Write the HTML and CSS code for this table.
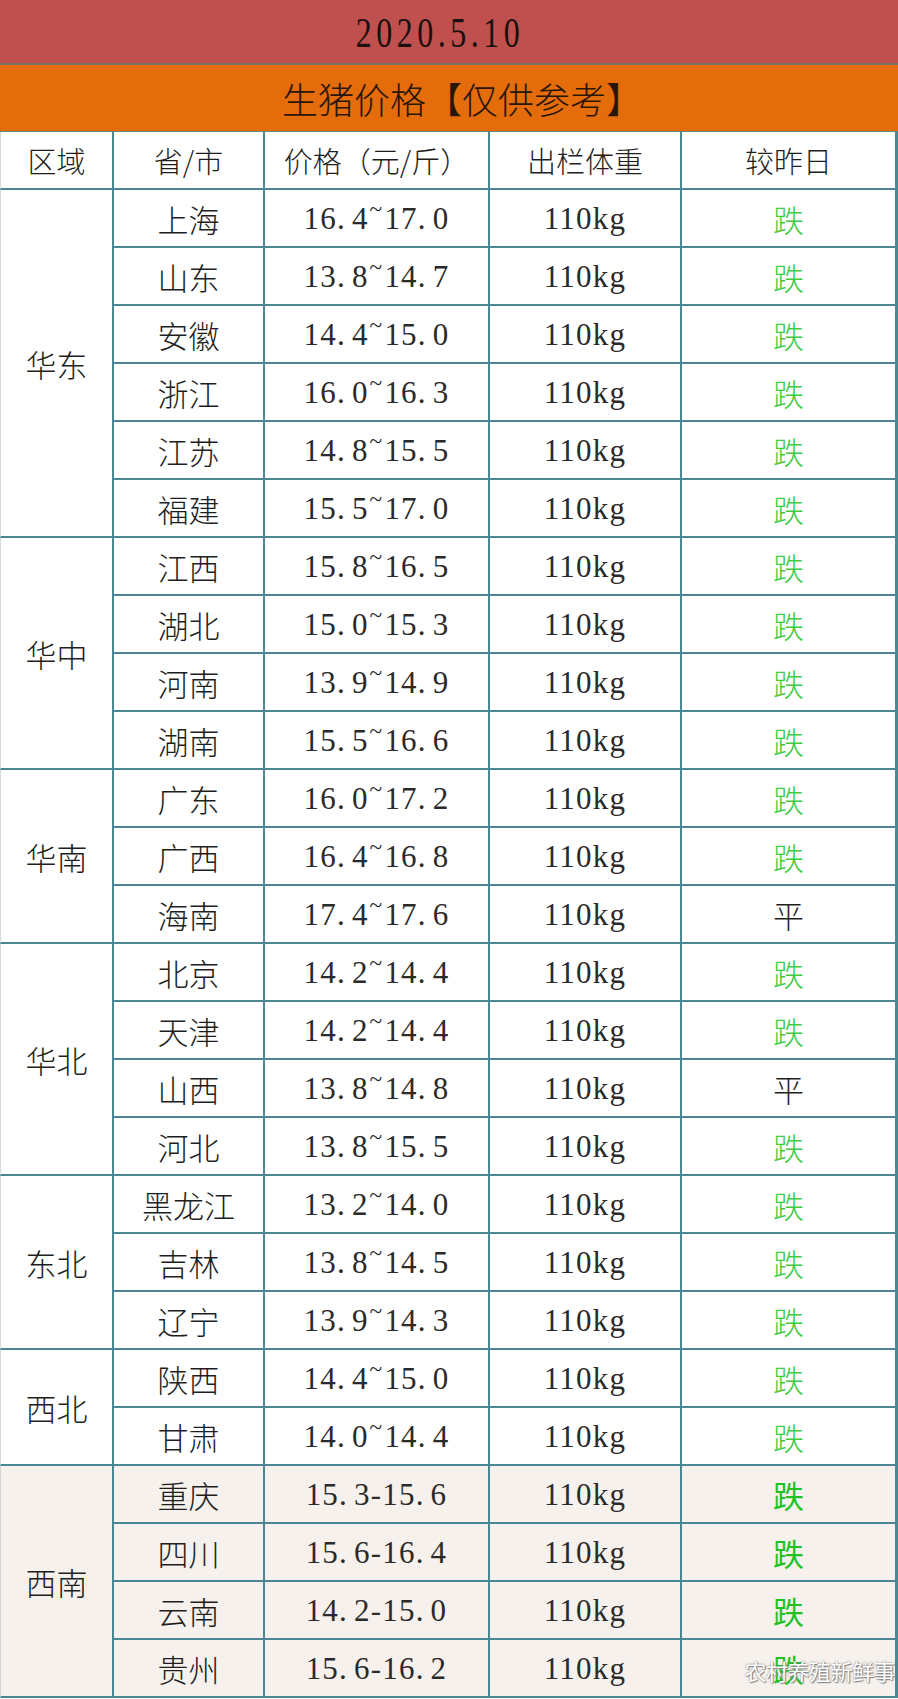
FILE: index.html
```html
<!DOCTYPE html>
<html lang="zh">
<head>
<meta charset="utf-8">
<title>生猪价格</title>
<link rel="stylesheet" href="styles.css">
</head>
<body>
<div class="sheet">
  <div class="date-band"><span class="date">2020.5.10</span></div>
  <div class="title-band">生猪价格【仅供参考】</div>
  <div class="grid">
    <div class="c hd first">区域</div>
    <div class="c hd">省/市</div>
    <div class="c hd">价格（元/斤）</div>
    <div class="c hd">出栏体重</div>
    <div class="c hd last">较昨日</div>

    <div class="c region first r6">华东</div>
    <div class="c cn">上海</div><div class="c num">16<i>.</i>4<span class="tl">~</span>17<i>.</i>0</div><div class="c num">110kg</div><div class="c down last">跌</div>
    <div class="c cn">山东</div><div class="c num">13<i>.</i>8<span class="tl">~</span>14<i>.</i>7</div><div class="c num">110kg</div><div class="c down last">跌</div>
    <div class="c cn">安徽</div><div class="c num">14<i>.</i>4<span class="tl">~</span>15<i>.</i>0</div><div class="c num">110kg</div><div class="c down last">跌</div>
    <div class="c cn">浙江</div><div class="c num">16<i>.</i>0<span class="tl">~</span>16<i>.</i>3</div><div class="c num">110kg</div><div class="c down last">跌</div>
    <div class="c cn">江苏</div><div class="c num">14<i>.</i>8<span class="tl">~</span>15<i>.</i>5</div><div class="c num">110kg</div><div class="c down last">跌</div>
    <div class="c cn">福建</div><div class="c num">15<i>.</i>5<span class="tl">~</span>17<i>.</i>0</div><div class="c num">110kg</div><div class="c down last">跌</div>

    <div class="c region first r4">华中</div>
    <div class="c cn">江西</div><div class="c num">15<i>.</i>8<span class="tl">~</span>16<i>.</i>5</div><div class="c num">110kg</div><div class="c down last">跌</div>
    <div class="c cn">湖北</div><div class="c num">15<i>.</i>0<span class="tl">~</span>15<i>.</i>3</div><div class="c num">110kg</div><div class="c down last">跌</div>
    <div class="c cn">河南</div><div class="c num">13<i>.</i>9<span class="tl">~</span>14<i>.</i>9</div><div class="c num">110kg</div><div class="c down last">跌</div>
    <div class="c cn">湖南</div><div class="c num">15<i>.</i>5<span class="tl">~</span>16<i>.</i>6</div><div class="c num">110kg</div><div class="c down last">跌</div>

    <div class="c region first r3">华南</div>
    <div class="c cn">广东</div><div class="c num">16<i>.</i>0<span class="tl">~</span>17<i>.</i>2</div><div class="c num">110kg</div><div class="c down last">跌</div>
    <div class="c cn">广西</div><div class="c num">16<i>.</i>4<span class="tl">~</span>16<i>.</i>8</div><div class="c num">110kg</div><div class="c down last">跌</div>
    <div class="c cn">海南</div><div class="c num">17<i>.</i>4<span class="tl">~</span>17<i>.</i>6</div><div class="c num">110kg</div><div class="c flat last">平</div>

    <div class="c region first r4">华北</div>
    <div class="c cn">北京</div><div class="c num">14<i>.</i>2<span class="tl">~</span>14<i>.</i>4</div><div class="c num">110kg</div><div class="c down last">跌</div>
    <div class="c cn">天津</div><div class="c num">14<i>.</i>2<span class="tl">~</span>14<i>.</i>4</div><div class="c num">110kg</div><div class="c down last">跌</div>
    <div class="c cn">山西</div><div class="c num">13<i>.</i>8<span class="tl">~</span>14<i>.</i>8</div><div class="c num">110kg</div><div class="c flat last">平</div>
    <div class="c cn">河北</div><div class="c num">13<i>.</i>8<span class="tl">~</span>15<i>.</i>5</div><div class="c num">110kg</div><div class="c down last">跌</div>

    <div class="c region first r3">东北</div>
    <div class="c cn">黑龙江</div><div class="c num">13<i>.</i>2<span class="tl">~</span>14<i>.</i>0</div><div class="c num">110kg</div><div class="c down last">跌</div>
    <div class="c cn">吉林</div><div class="c num">13<i>.</i>8<span class="tl">~</span>14<i>.</i>5</div><div class="c num">110kg</div><div class="c down last">跌</div>
    <div class="c cn">辽宁</div><div class="c num">13<i>.</i>9<span class="tl">~</span>14<i>.</i>3</div><div class="c num">110kg</div><div class="c down last">跌</div>

    <div class="c region first r2">西北</div>
    <div class="c cn">陕西</div><div class="c num">14<i>.</i>4<span class="tl">~</span>15<i>.</i>0</div><div class="c num">110kg</div><div class="c down last">跌</div>
    <div class="c cn">甘肃</div><div class="c num">14<i>.</i>0<span class="tl">~</span>14<i>.</i>4</div><div class="c num">110kg</div><div class="c down last">跌</div>

    <div class="c region first r4 sw">西南</div>
    <div class="c cn sw">重庆</div><div class="c num sw">15<i>.</i>3-15<i>.</i>6</div><div class="c num sw">110kg</div><div class="c down2 sw last">跌</div>
    <div class="c cn sw">四川</div><div class="c num sw">15<i>.</i>6-16<i>.</i>4</div><div class="c num sw">110kg</div><div class="c down2 sw last">跌</div>
    <div class="c cn sw">云南</div><div class="c num sw">14<i>.</i>2-15<i>.</i>0</div><div class="c num sw">110kg</div><div class="c down2 sw last">跌</div>
    <div class="c cn sw">贵州</div><div class="c num sw">15<i>.</i>6-16<i>.</i>2</div><div class="c num sw">110kg</div><div class="c down2 sw last">跌</div>
  </div>
  <div class="watermark">农村养殖新鲜事</div>
</div>
</body>
</html>
```
FILE: styles.css
```css
html, body {
  margin: 0;
  padding: 0;
  background: #ffffff;
}
.sheet {
  position: relative;
  width: 898px;
  font-family: "Noto Sans CJK SC", sans-serif;
  color: #1e1e1e;
}
.date-band {
  height: 63px;
  background: #c0504d;
  border-bottom: 2px solid #7d7464;
  display: flex;
  align-items: center;
  justify-content: center;
}
.date {
  display: inline-block;
  font-family: "Liberation Serif", serif;
  font-size: 32px;
  letter-spacing: 4.5px;
  transform: scaleY(1.3);
  color: #1a1010;
  margin-right: 18px;
  margin-top: 4px;
}
.title-band {
  height: 67px;
  background: #e46c0a;
  border-bottom: 1px solid #5d8787;
  display: flex;
  align-items: center;
  justify-content: center;
  font-size: 36px;
  font-weight: 300;
  color: #2a1608;
  padding-left: 26px;
  box-sizing: border-box;
}
.grid {
  display: grid;
  grid-template-columns: 114px 151px 225px 192px 216px;
  grid-auto-rows: 58px;
}
.c {
  box-sizing: border-box;
  border-right: 2px solid #4b8792;
  border-bottom: 2px solid #4b8792;
  display: flex;
  align-items: center;
  justify-content: center;
  background: #ffffff;
}
.first {
  border-left: 1px solid #d6d6d6;
}
.last {
  border-right: 3px solid #4b8792;
}
.hd {
  font-size: 29px;
  font-weight: 300;
}
.region, .cn {
  font-size: 31px;
  font-weight: 300;
}
.r2 { grid-row: span 2; }
.r3 { grid-row: span 3; }
.r4 { grid-row: span 4; }
.r6 { grid-row: span 6; }
.num {
  font-family: "Liberation Serif", serif;
  font-size: 31px;
  letter-spacing: 1.2px;
  color: #2a2a2a;
  padding-top: 2px;
}
.num i {
  font-style: normal;
  margin-right: 6px;
}
.tl {
  display: inline-block;
  font-size: 0.75em;
  transform: translateY(-0.45em);
  margin: 0 1px;
}
.down {
  font-size: 31px;
  font-weight: 300;
  color: #3ccc3c;
}
.down2 {
  font-size: 31px;
  font-weight: 400;
  color: #1fc21f;
}
.flat {
  font-size: 31px;
  font-weight: 300;
  color: #1e1e1e;
}
.sw {
  background: #f6f1ec;
}
.watermark {
  position: absolute;
  right: 3px;
  bottom: 12px;
  font-size: 22px;
  color: #ffffff;
  text-shadow: 0 0 2px #6e6e6e, 1px 1px 1px #8a8a8a;
  letter-spacing: -0.5px;
}
```
